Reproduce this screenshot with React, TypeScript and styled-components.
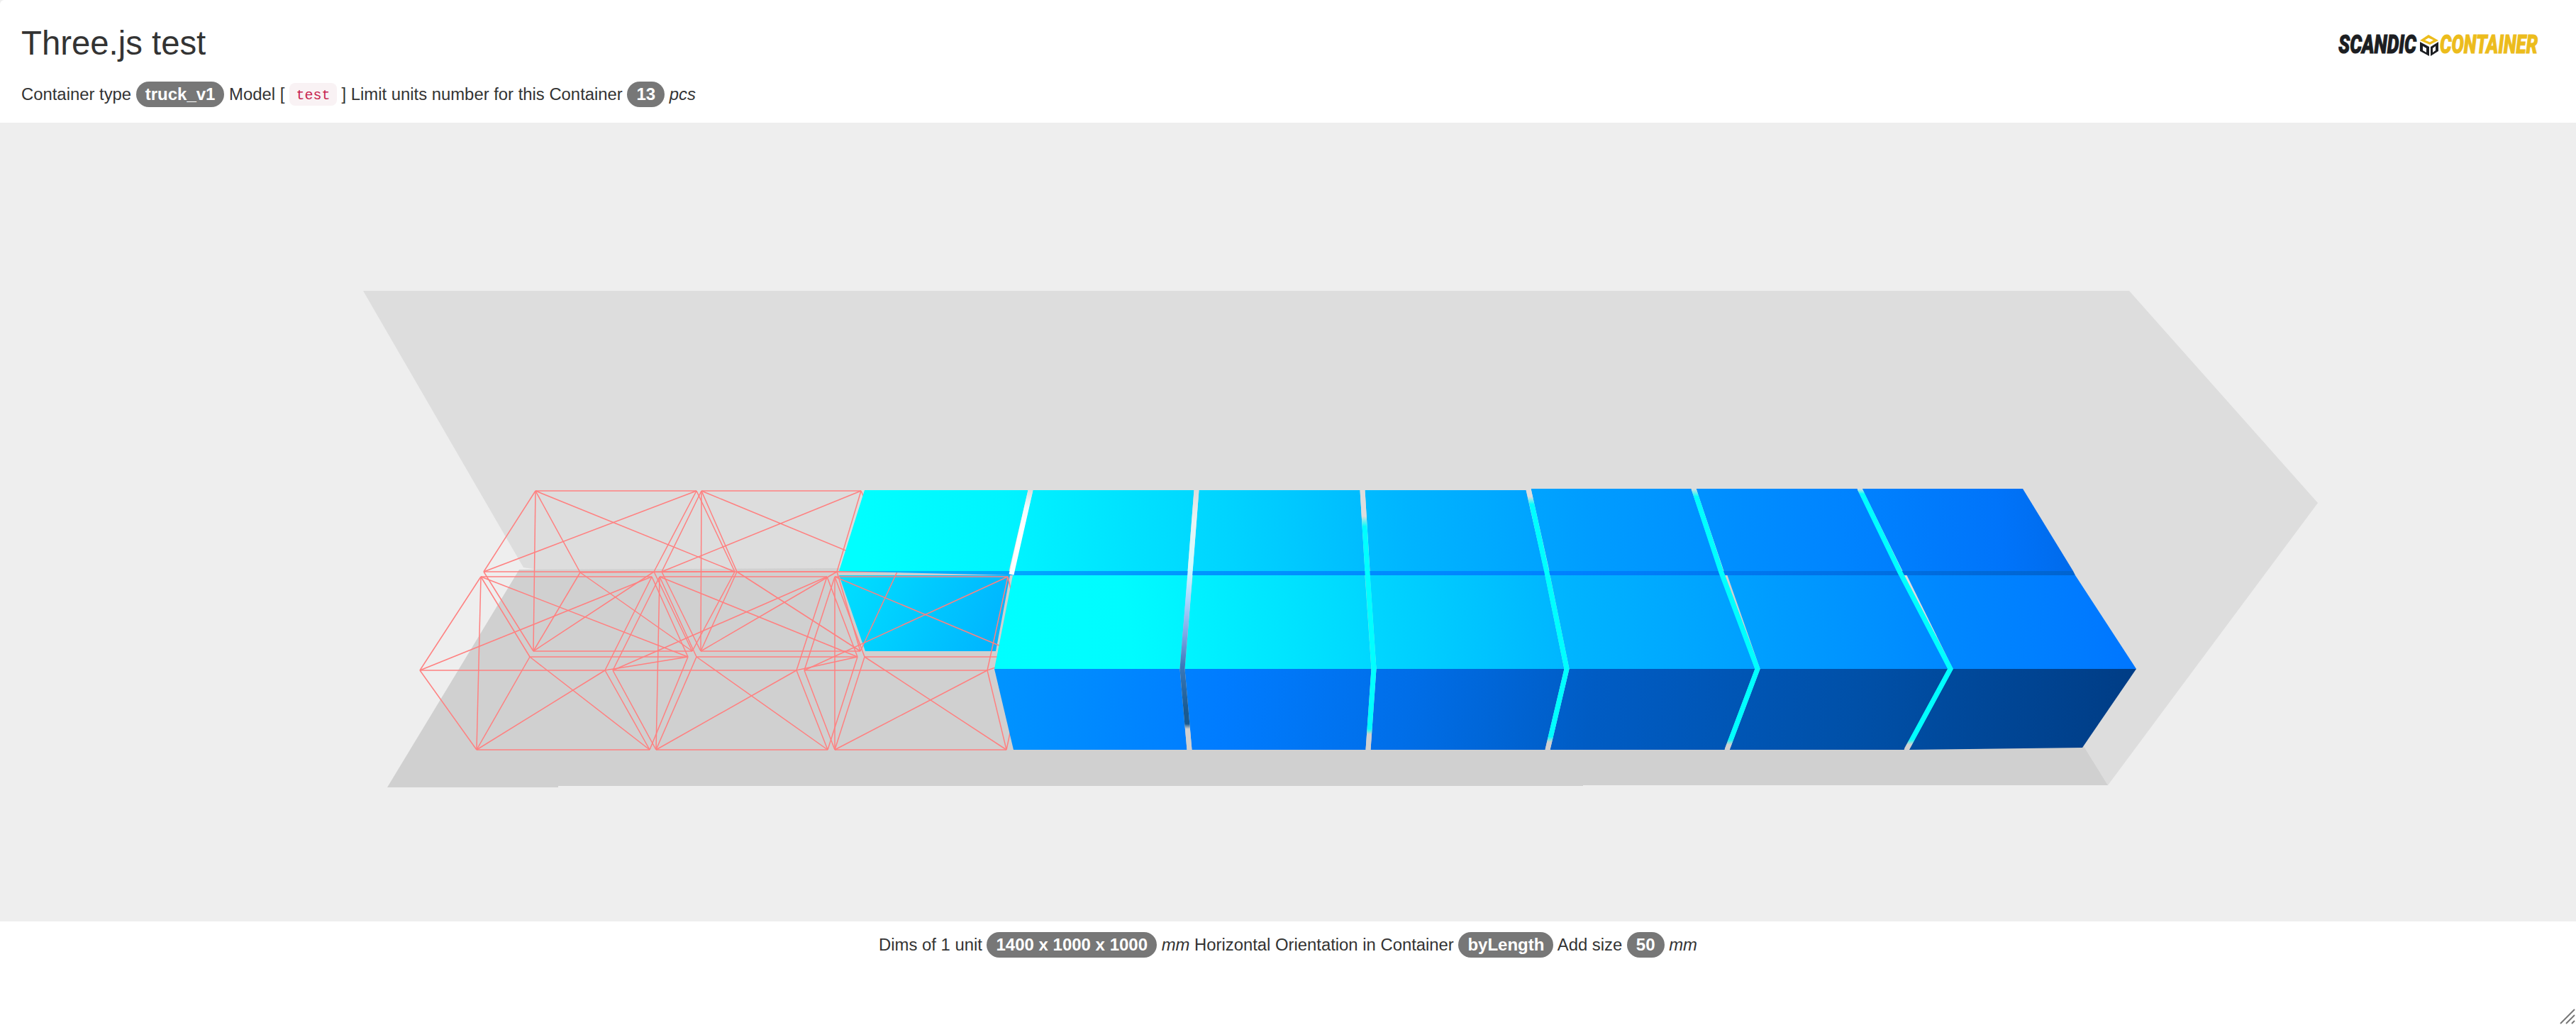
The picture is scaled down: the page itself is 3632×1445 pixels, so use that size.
import React from "react";
import styled, { createGlobalStyle } from "styled-components";

type Pt = [number, number];

const GlobalStyle = createGlobalStyle`
  html, body { margin: 0; padding: 0; background: #eeeeee; }
  body { font-family: "Liberation Sans", Arial, sans-serif; color: #333; }
`;

const Page = styled.div`
  position: relative;
  width: 3632px;
  height: 1445px;
  display: flex;
  flex-direction: column;
  overflow: hidden;
  background: #fff;
  border-top-left-radius: 6px;
`;

const Header = styled.header`
  height: 173px;
  box-sizing: border-box;
  padding: 33px 30px 0;
  display: flex;
  justify-content: space-between;
  align-items: flex-start;
`;

const Heading = styled.div`
  display: flex;
  flex-direction: column;
  gap: 26px;
`;

const Title = styled.h1`
  margin: 0;
  font-size: 47.3px;
  line-height: 56px;
  font-weight: 400;
  color: #333;
`;

const Line = styled.p<{ $center?: boolean }>`
  margin: 0;
  font-size: 23.85px;
  line-height: 36px;
  color: #333;
  white-space: pre;
  text-align: ${(p) => (p.$center ? "center" : "left")};
`;

const Badge = styled.span`
  display: inline-block;
  height: 36px;
  line-height: 36px;
  padding: 0 13px;
  border-radius: 18px;
  background: #777;
  color: #fff;
  font-size: 24px;
  font-weight: 700;
  vertical-align: top;
`;

const Code = styled.code`
  display: inline-block;
  height: 32px;
  line-height: 35px;
  margin-top: 2px;
  padding: 0 9.5px;
  border-radius: 8px;
  background: #f9f2f4;
  color: #c7254e;
  font-family: "Liberation Mono", monospace;
  font-size: 20px;
  vertical-align: top;
`;

const Scene = styled.svg`
  display: block;
  width: 3632px;
  height: 1126px;
  flex: none;
  background: #eeeeee;
`;

const Footer = styled.footer`
  flex: 1;
  padding-top: 15px;
`;

const Resizer = styled.svg`
  position: absolute;
  right: 0;
  bottom: 0;
  width: 24px;
  height: 24px;
`;

const LogoMark = styled.svg`
  display: block;
  width: 300px;
  height: 60px;
  margin: 1px 5px 0 0;
`;

const pts = (list: Pt[]) => list.map((p) => p.join(",")).join(" ");

// gap centres across the block rows, at each horizon of the rows
const backTop = [1219, 1453, 1687, 1921, 2155, 2388, 2622, 2852];
const backBottom = [1183, 1426, 1678, 1928, 2181, 2427, 2679, 2923];
const frontBack = [1428, 1678, 1928, 2182, 2432, 2685, 2926];
const frontMid = [1402, 1667, 1937, 2209, 2478, 2750, 3012];
const frontBottom = [1429, 1677, 1929, 2182, 2435, 2688, 2936];

const HALF_GAP = 3.5;

const gaps: { id: string; points: Pt[]; stops: [number, string][] }[] = [
  {
    id: "gap1",
    points: [[1453, 691], [1426, 810]],
    stops: [[0, "#dddddd"], [0.2, "#eefcff"], [0.4, "#ffffff"], [1, "#ffffff"]],
  },
  {
    id: "gap2",
    points: [[1687, 691], [1678, 807], [1667, 943], [1677, 1057]],
    stops: [
      [0, "#dddddd"], [0.12, "#e8f4f4"], [0.3, "#d0fbff"], [0.42, "#a8d8ff"], [0.55, "#80a8e8"],
      [0.68, "#3a78b8"], [0.85, "#1a5a90"], [0.9, "#1a5a90"], [0.92, "#d0d0d0"], [1, "#d0d0d0"],
    ],
  },
  {
    id: "gap3",
    points: [[1921, 691], [1928, 807], [1937, 943], [1929, 1057]],
    stops: [[0, "#dddddd"], [0.1, "#dddddd"], [0.14, "#00ffff"], [0.92, "#00ffff"], [0.94, "#d0d0d0"], [1, "#d0d0d0"]],
  },
  {
    id: "gap4",
    points: [[2155, 689], [2181, 807], [2209, 943], [2182, 1057]],
    stops: [[0, "#dddddd"], [0.03, "#dddddd"], [0.06, "#00ffff"], [0.95, "#00ffff"], [0.97, "#d0d0d0"], [1, "#d0d0d0"]],
  },
  {
    id: "gap5",
    points: [[2388, 689], [2427, 807], [2478, 943], [2435, 1057]],
    stops: [[0, "#dddddd"], [0.03, "#00ffff"], [0.96, "#00ffff"], [0.98, "#d0d0d0"], [1, "#d0d0d0"]],
  },
  {
    id: "gap6",
    points: [[2622, 689], [2679, 807], [2750, 943], [2688, 1057]],
    stops: [[0, "#dddddd"], [0.02, "#00ffff"], [0.96, "#00ffff"], [0.98, "#d0d0d0"], [1, "#d0d0d0"]],
  },
];

const inset = (i: number, last: number) => [i === 0 ? 0 : HALF_GAP, i === last ? 0 : HALF_GAP];

const backCells = backTop.slice(0, -1).map((x, i) => {
  const [l, r] = inset(i, 6);
  const y = i >= 4 ? 689 : 691;
  return [[x + l, y], [backTop[i + 1] - r, y], [backBottom[i + 1] - r, 805], [backBottom[i] + l, 805]] as Pt[];
});

const frontTops = frontMid.slice(0, -1).map((x, i) => {
  const [l, r] = inset(i, 5);
  return [[frontBack[i] + l, 811], [frontBack[i + 1] - r, 811], [frontMid[i + 1] - r, 943], [x + l, 943]] as Pt[];
});

const frontSides = frontMid.slice(0, -1).map((x, i) => {
  const [l, r] = inset(i, 5);
  const yEnd = i === 5 ? 1054 : 1057;
  return [[x + l, 943], [frontMid[i + 1] - r, 943], [frontBottom[i + 1] - r, yEnd], [frontBottom[i] + l, 1057]] as Pt[];
});

// wire boxes: front-bottom L/R, front-top R/L, back-top L/R, back-bottom R/L
type Wire = Record<"a" | "b" | "c" | "d" | "e" | "f" | "g" | "h", Pt>;

const wires: Wire[] = [
  { a: [752, 918], b: [976, 918], c: [922, 806], d: [682, 806], e: [755, 692], f: [982, 692], g: [1036, 806], h: [818, 807] },
  { a: [988, 918], b: [1213, 918], c: [1180, 806], d: [933, 806], e: [989, 692], f: [1214, 692], g: [1265, 806], h: [1039, 806] },
  { a: [672, 1057], b: [916, 1057], c: [853, 945], d: [592, 945], e: [678, 813], f: [919, 813], g: [970, 926], h: [747, 926] },
  { a: [925, 1057], b: [1167, 1057], c: [1123, 945], d: [864, 945], e: [930, 813], f: [1166, 813], g: [1209, 926], h: [982, 926] },
  { a: [1177, 1057], b: [1419, 1057], c: [1392, 945], d: [1134, 945], e: [1177, 813], f: [1421, 813], g: [1447, 926], h: [1219, 926] },
];

// box outline plus one diagonal for each face
const wireEdges: [keyof Wire, keyof Wire][] = [
  ["a", "b"], ["b", "c"], ["c", "d"], ["d", "a"],
  ["e", "f"], ["f", "g"], ["g", "h"], ["h", "e"],
  ["a", "h"], ["b", "g"], ["c", "f"], ["d", "e"],
  ["a", "c"], ["b", "h"], ["d", "f"], ["e", "g"], ["a", "e"], ["c", "g"],
];

const Stops = ({ stops }: { stops: [number, string][] }) => (
  <>
    {stops.map(([o, c]) => (
      <stop key={o} offset={o} stopColor={c} />
    ))}
  </>
);

const Container = () => (
  <Scene viewBox="0 173 3632 1126">
    <defs>
      <linearGradient id="backTopFace" gradientUnits="userSpaceOnUse" x1="1219" y1="805" x2="2923" y2="600">
        <Stops stops={[[0, "#00ffff"], [0.12, "#00f4ff"], [0.3, "#00d4ff"], [0.45, "#00b4ff"], [0.6, "#009cff"], [0.8, "#0084ff"], [0.93, "#0074fa"], [1, "#0068e8"]]} />
      </linearGradient>
      <linearGradient id="frontTopFace" gradientUnits="userSpaceOnUse" x1="1402" y1="943" x2="3012" y2="720">
        <Stops stops={[[0, "#00ffff"], [0.12, "#00fcff"], [0.3, "#00dcff"], [0.5, "#00b4ff"], [0.65, "#00a0ff"], [0.82, "#0088ff"], [1, "#0074ff"]]} />
      </linearGradient>
      <linearGradient id="sideFace" gradientUnits="userSpaceOnUse" x1="1402" y1="943" x2="3012" y2="1110">
        <Stops stops={[[0, "#0094ff"], [0.2, "#007cff"], [0.36, "#006ee8"], [0.52, "#005cc4"], [0.75, "#0050a8"], [1, "#003c84"]]} />
      </linearGradient>
      <linearGradient id="seam" gradientUnits="userSpaceOnUse" x1="1183" y1="0" x2="2923" y2="0">
        <Stops stops={[[0, "#00b8ff"], [0.3, "#0094ff"], [0.6, "#0080ff"], [1, "#0064d0"]]} />
      </linearGradient>
      <linearGradient id="hollowFace" gradientUnits="userSpaceOnUse" x1="1183" y1="811" x2="1404" y2="918">
        <Stops stops={[[0, "#00e0ff"], [1, "#00b4ff"]]} />
      </linearGradient>
      {gaps.map((g) => (
        <linearGradient key={g.id} id={g.id} gradientUnits="userSpaceOnUse" x1="0" y1={g.points[0][1]} x2="0" y2={g.points[g.points.length - 1][1]}>
          <Stops stops={g.stops} />
        </linearGradient>
      ))}
    </defs>

    <polygon fill="#dddddd" points={pts([[512, 410], [3002, 410], [3268, 709], [2972, 1107], [2938, 1052], [1400, 900], [738, 800]])} />
    <polygon fill="#d0d0d0" points={pts([[732, 803], [1400, 800], [2600, 800], [2938, 1052], [2972, 1107], [2232, 1107], [2232, 1108], [787, 1108], [787, 1110], [546, 1110]])} />

    <polygon fill="url(#hollowFace)" points={pts([[1183, 811], [1424, 811], [1404, 918], [1220, 918]])} />

    {wires.map((w, i) => (
      <g key={i} stroke="#ff8080" strokeWidth="1.5">
        {wireEdges.map(([p, q]) => (
          <line key={p + q} x1={w[p][0]} y1={w[p][1]} x2={w[q][0]} y2={w[q][1]} />
        ))}
      </g>
    ))}

    <polygon fill="url(#seam)" points={pts([[1183, 805], [2923, 805], [2926, 811], [1424, 811]])} />
    {backCells.map((c, i) => (
      <polygon key={i} fill="url(#backTopFace)" points={pts(c)} />
    ))}
    {frontTops.map((c, i) => (
      <polygon key={i} fill="url(#frontTopFace)" points={pts(c)} />
    ))}
    {frontSides.map((c, i) => (
      <polygon key={i} fill="url(#sideFace)" points={pts(c)} />
    ))}
    {gaps.map((g) => (
      <polyline key={g.id} fill="none" stroke={`url(#${g.id})`} strokeWidth="7" points={pts(g.points)} />
    ))}
  </Scene>
);

const Logo = () => (
  <LogoMark viewBox="0 -10 300 60">
    <text transform="translate(0 31) scale(1 1.55)" textLength="110" lengthAdjust="spacingAndGlyphs" fontFamily="Roboto, sans-serif" fontWeight="900" fontStyle="italic" fontSize="24" fill="#1c1e22" stroke="#1c1e22" strokeWidth="0.7">SCANDIC</text>
    <g strokeLinejoin="round">
      <polygon points="115,13 127,5 141,13 129,19" fill="#ecbc1c" />
      <polygon points="122,12.5 127,9.5 134,12.5 129,15.5" fill="#fff" />
      <polygon points="115,15 128,22 128,35 115,28" fill="#1c1e22" />
      <polygon points="141,15 130,22 130,35 141,28" fill="#1c1e22" />
      <polygon points="119,21 124,24 124,30 119,27" fill="#fff" />
      <polygon points="137,21 133,24 133,30 137,27" fill="#fff" />
    </g>
    <text transform="translate(143 31) scale(1 1.55)" textLength="138" lengthAdjust="spacingAndGlyphs" fontFamily="Roboto, sans-serif" fontWeight="900" fontStyle="italic" fontSize="24" fill="#ecbc1c" stroke="#ecbc1c" strokeWidth="0.7">CONTAINER</text>
  </LogoMark>
);

export default function App() {
  return (
    <Page>
      <GlobalStyle />
      <Header>
        <Heading>
          <Title>Three.js test</Title>
          <Line>
            Container type <Badge>truck_v1</Badge> Model [ <Code>test</Code> ] Limit units number for this Container <Badge>13</Badge> <em>pcs</em>
          </Line>
        </Heading>
        <Logo />
      </Header>
      <Container />
      <Footer>
        <Line $center>
          Dims of 1 unit <Badge>1400 x 1000 x 1000</Badge> <em>mm</em> Horizontal Orientation in Container <Badge>byLength</Badge> Add size <Badge>50</Badge> <em>mm</em>
        </Line>
      </Footer>
      <Resizer viewBox="0 0 24 24">
        <path d="M2 22L22 2M10 22L22 10M18 22L22 18" stroke="#777" strokeWidth="2" fill="none" />
      </Resizer>
    </Page>
  );
}
